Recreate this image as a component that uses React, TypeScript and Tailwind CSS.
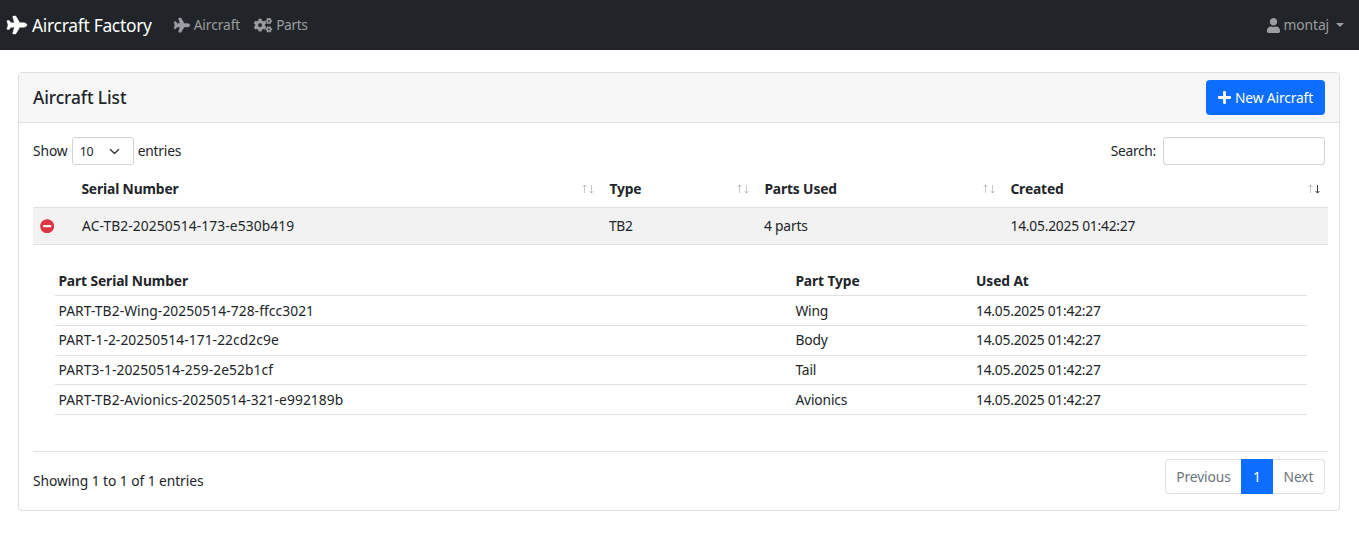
import type { ReactNode } from "react";
import { FaCogs, FaMinusCircle, FaPlane, FaPlus, FaUser } from "react-icons/fa";

const aircraftColumns = [
  { label: "Serial Number", sorted: false },
  { label: "Type", sorted: false },
  { label: "Parts Used", sorted: false },
  { label: "Created", sorted: true },
];

const parts = [
  { serial: "PART-TB2-Wing-20250514-728-ffcc3021", type: "Wing", usedAt: "14.05.2025 01:42:27", height: "h-[30px]" },
  { serial: "PART-1-2-20250514-171-22cd2c9e", type: "Body", usedAt: "14.05.2025 01:42:27", height: "h-[30px] pb-[2px]" },
  { serial: "PART3-1-20250514-259-2e52b1cf", type: "Tail", usedAt: "14.05.2025 01:42:27", height: "h-[29px] pb-px" },
  { serial: "PART-TB2-Avionics-20250514-321-e992189b", type: "Avionics", usedAt: "14.05.2025 01:42:27", height: "h-[30px]" },
];

function SortArrows({ active }: { active: boolean }) {
  return (
    <svg width="14" height="10" viewBox="0 0 14 10" fill="none" stroke="#212529" className="mr-[7px] shrink-0">
      <path d="M3.5 9V1M1.5 3L3.5 1L5.5 3" strokeOpacity=".25" />
      <path d="M10.5 1V9M8.5 7L10.5 9L12.5 7" strokeOpacity={active ? 0.9 : 0.25} />
    </svg>
  );
}

function Navbar() {
  return (
    <nav className="flex h-[50px] items-center bg-[#212529] text-[#9b9d9e]">
      <a className="ml-[7px] flex items-center text-white">
        <FaPlane className="h-[18px] w-[20px] overflow-visible stroke-current stroke-[14]" />
        <span className="ml-[5px] text-[17.4px] tracking-[-0.28px]">Aircraft Factory</span>
      </a>
      <a className="ml-[22px] flex items-center">
        <FaPlane className="h-[14.4px] w-[16px] overflow-visible stroke-current stroke-[16]" />
        <span className="ml-1 pb-px">Aircraft</span>
      </a>
      <a className="ml-[14px] flex items-center">
        <FaCogs className="h-[14.4px] w-[18px] overflow-visible stroke-current stroke-[8]" />
        <span className="ml-1 pb-px tracking-[-0.4px]">Parts</span>
      </a>
      <a className="mr-[15px] ml-auto flex items-center">
        <FaUser className="h-[15px] w-[13px]" />
        <span className="ml-1 pb-px">montaj</span>
        <span className="ml-[7px] border-x-4 border-t-4 border-x-transparent border-t-current" />
      </a>
    </nav>
  );
}

function AircraftTable() {
  return (
    <div className="-mr-[3px]">
      <div className="grid h-[37px] grid-cols-[41px_528px_155px_246px_1fr] items-center border-b border-[#dee2e6] font-bold">
        <span />
        {aircraftColumns.map((c) => (
          <div key={c.label} className="flex items-center justify-between pl-[7.4px]">
            <span className="pb-px tracking-[-0.13px]">{c.label}</span>
            <SortArrows active={c.sorted} />
          </div>
        ))}
      </div>
      <div className="grid h-[37px] grid-cols-[41px_528px_155px_246px_1fr] items-center border-b border-[#dee2e6] bg-[#f2f2f2]">
        <FaMinusCircle className="ml-[7px] size-[14.4px] text-[#dc3545]" />
        <span className="pb-[2px] pl-2 tracking-[0.1px]">AC-TB2-20250514-173-e530b419</span>
        <span className="pb-[2px] pl-[7px] tracking-[-0.3px]">TB2</span>
        <span className="pb-[2px] pl-[7px] tracking-[-0.2px]">4 parts</span>
        <span className="pb-[2px] pl-[7.5px] tracking-[-0.22px]">14.05.2025 01:42:27</span>
      </div>
      <div className="h-[207px] border-b border-[#dee2e6] pt-[22px] pr-[21px] pl-[22px]">
        <PartRow height="h-[29px] pb-px" bold cells={["Part Serial Number", "Part Type", "Used At"]} />
        {parts.map((p) => (
          <PartRow key={p.serial} height={p.height} cells={[p.serial, p.type, p.usedAt]} />
        ))}
      </div>
    </div>
  );
}

function PartRow({ cells, height, bold = false }: { cells: ReactNode[]; height: string; bold?: boolean }) {
  const spacing = bold
    ? ["tracking-[-0.1px]", "tracking-[-0.1px]", "tracking-[-0.1px]"]
    : ["tracking-[0.08px]", "tracking-[-0.15px]", "tracking-[-0.22px]"];
  return (
    <div className={`grid grid-cols-[737px_180px_1fr] items-center border-b border-[#dee2e6] ${height} ${bold ? "font-bold" : ""}`}>
      {cells.map((cell, i) => (
        <span key={i} className={`${i === 2 ? "pl-1" : "pl-[3.4px]"} ${spacing[i]}`}>{cell}</span>
      ))}
    </div>
  );
}

export default function App() {
  return (
    <div className="h-[543px] overflow-hidden bg-white font-['Noto_Sans',sans-serif] text-[13.8px] leading-[21px] tracking-[-0.1px] text-[#212529]">
      <Navbar />
      <main className="mt-[22px] mr-[19px] ml-[18px] h-[439px] rounded-[4px] border border-[#dfdfdf]">
        <header className="flex h-[50px] items-center justify-between rounded-t-[3px] border-b border-[#dfdfdf] bg-[#f7f7f7] px-[14px]">
          <h5 className="text-[17.3px] font-medium tracking-[-0.08px]">Aircraft List</h5>
          <button className="flex h-[35px] w-[119px] items-center justify-center rounded-[4px] bg-[#0d6efd] text-white">
            <FaPlus className="h-[15px] w-[13px]" />
            <span className="ml-1 tracking-[-0.15px]">New Aircraft</span>
          </button>
        </header>
        <div className="px-[14px] pt-[14px]">
          <div className="flex h-[28px] items-center justify-between">
            <label className="flex items-center">
              <span className="pb-[2px]">Show</span>
              <span className="mx-1 flex h-[28px] w-[62px] items-center justify-between rounded-[3px] border border-[#ced4da] pr-[13px] pl-[7px] text-[12.4px]">
                10
                <svg width="11" height="11" viewBox="0 0 16 16" fill="none" stroke="#343a40" strokeWidth="2" strokeLinecap="round" strokeLinejoin="round">
                  <path d="m2 5 6 6 6-6" />
                </svg>
              </span>
              <span className="pb-[2px] tracking-[-0.2px]">entries</span>
            </label>
            <label className="flex items-center">
              <span className="pb-[2px] tracking-[-0.3px]">Search:</span>
              <input className="ml-[7px] h-[28px] w-[162px] rounded-[3px] border border-[#ced4da] bg-white" />
            </label>
          </div>
          <div className="mt-[6px]">
            <AircraftTable />
          </div>
          <footer className="mt-[7px] flex items-start justify-between">
            <span className="mt-[11px] tracking-[-0.06px]">Showing 1 to 1 of 1 entries</span>
            <div className="flex h-[35px] w-[160px] text-[#6c757d]">
              <span className="flex w-[76px] items-center justify-center rounded-l-[4px] border border-r-0 border-[#dee2e6]">Previous</span>
              <span className="flex w-[32px] items-center justify-center bg-[#0d6efd] text-white">1</span>
              <span className="flex w-[52px] items-center justify-center rounded-r-[4px] border border-l-0 border-[#dee2e6]">Next</span>
            </div>
          </footer>
        </div>
      </main>
    </div>
  );
}
